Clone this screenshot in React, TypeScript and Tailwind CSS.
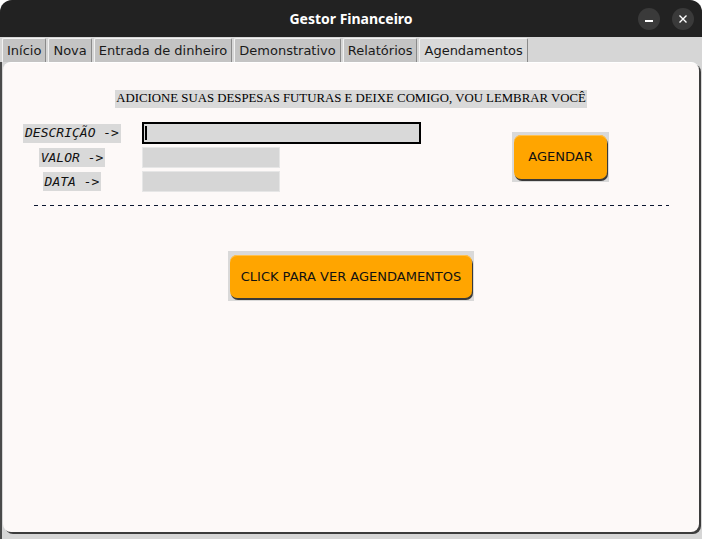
import React from "react";

const tabs = ["Início", "Nova", "Entrada de dinheiro", "Demonstrativo", "Relatórios", "Agendamentos"];

function OrangeButton({ label, outer, inner }: { label: string; outer: string; inner: string }) {
  return (
    <div className={`bg-[#d9d9d9] flex ${outer}`}>
      <button
        className={`bg-[#ffa500] rounded-[7px] shadow-[1px_2px_0_#3a3a3a,inset_0_1px_0_#ffc04d] text-[13px] text-[#111] font-['DejaVu_Sans',sans-serif] flex items-center justify-center ${inner}`}
      >
        {label}
      </button>
    </div>
  );
}

export default function App() {
  return (
    <div className="w-[702px] h-[539px] bg-white overflow-hidden">
      <div className="w-[702px] h-[539px] rounded-t-[12px] overflow-hidden bg-[#d6d6d6] flex flex-col">
        {/* Title bar */}
        <div className="h-[37px] bg-[#222222] flex items-center relative shrink-0">
          <div className="flex-1 text-center text-white font-bold text-[14px] font-['Noto_Sans',sans-serif]">
            Gestor Financeiro
          </div>
          <div className="absolute right-[8px] top-[8px] flex gap-[12px]">
            <div className="w-[22px] h-[22px] rounded-full bg-[#3a3a3a] flex items-center justify-center">
              <div className="w-[8px] h-[2px] bg-white mt-[4px]" />
            </div>
            <div className="w-[22px] h-[22px] rounded-full bg-[#3a3a3a] flex items-center justify-center">
              <svg width="10" height="10" viewBox="0 0 10 10">
                <path d="M1.5 1.5 L8.5 8.5 M8.5 1.5 L1.5 8.5" stroke="white" strokeWidth="1.4" />
              </svg>
            </div>
          </div>
        </div>

        {/* Tab bar */}
        <div className="h-[25px] flex items-end pl-[2px] shrink-0 font-['DejaVu_Sans',sans-serif] text-[13px] text-[#1a1a1a]">
          {tabs.map((t, i) => {
            const sel = i === tabs.length - 1;
            return (
              <div
                key={t}
                className={`h-[24px] flex items-center px-[4px] mr-[2px] border-t border-l border-r border-t-[#f2f2f2] border-l-[#f2f2f2] border-r-[#8a8a8a] rounded-t-[2px] ${
                  sel ? "bg-[#d9d9d9]" : "bg-[#c4c4c4]"
                }`}
              >
                {t}
              </div>
            );
          })}
        </div>

        {/* Panel */}
        <div className="flex-1 flex pb-[7px] border-l-2 border-l-[#4a4a4a]">
          <div className="flex-1 ml-[1px] mr-[3px] bg-[#fdf9f8] rounded-[8px] border-t border-t-white shadow-[2px_2px_0_#3c3c3c] flex flex-col items-center">
            <div className="mt-[27px] bg-[#d9d9d9] px-[1px] h-[18px] flex items-center text-[12.8px] text-black font-['Liberation_Serif',serif]">
              ADICIONE SUAS DESPESAS FUTURAS E DEIXE COMIGO, VOU LEMBRAR VOCÊ
            </div>

            <div className="self-stretch flex mt-[14px] pl-[19px]">
              <div className="grid grid-cols-[100px_auto] gap-x-[20px] gap-y-[3px] items-center">
                <div className="justify-self-center bg-[#d9d9d9] h-[19px] px-[2px] flex items-center italic text-[13px] text-[#111] font-['DejaVu_Sans_Mono',monospace]">
                  DESCRIÇÃO -&gt;
                </div>
                <div className="w-[279px] h-[22px] bg-[#d9d9d9] border-2 border-black flex items-center pl-[1px]">
                  <div className="w-[2px] h-[14px] bg-black" />
                </div>
                <div className="justify-self-center bg-[#d9d9d9] h-[19px] px-[2px] flex items-center italic text-[13px] text-[#111] font-['DejaVu_Sans_Mono',monospace]">
                  VALOR -&gt;
                </div>
                <div className="w-[138px] h-[21px] bg-[#d6d6d6] border border-[#e6e6e6]" />
                <div className="justify-self-center bg-[#d9d9d9] h-[19px] px-[2px] flex items-center italic text-[13px] text-[#111] font-['DejaVu_Sans_Mono',monospace]">
                  DATA -&gt;
                </div>
                <div className="w-[138px] h-[21px] bg-[#d6d6d6] border border-[#e6e6e6]" />
              </div>
              <div className="ml-[91px] mt-[10px]">
                <OrangeButton label="AGENDAR" outer="w-[97px] h-[50px] pl-[2px] pt-[3px]" inner="w-[93px] h-[44px]" />
              </div>
            </div>

            <div className="self-stretch ml-[31px] mr-[30px] mt-[13px] h-px bg-[repeating-linear-gradient(90deg,#0b1630_0_4px,transparent_4px_8px)]" />

            <div className="mt-[45px]">
              <OrangeButton
                label="CLICK PARA VER AGENDAMENTOS"
                outer="w-[246px] h-[50px] pl-[2px] pt-[4px]"
                inner="w-[242px] h-[43px]"
              />
            </div>
          </div>
        </div>
      </div>
    </div>
  );
}
